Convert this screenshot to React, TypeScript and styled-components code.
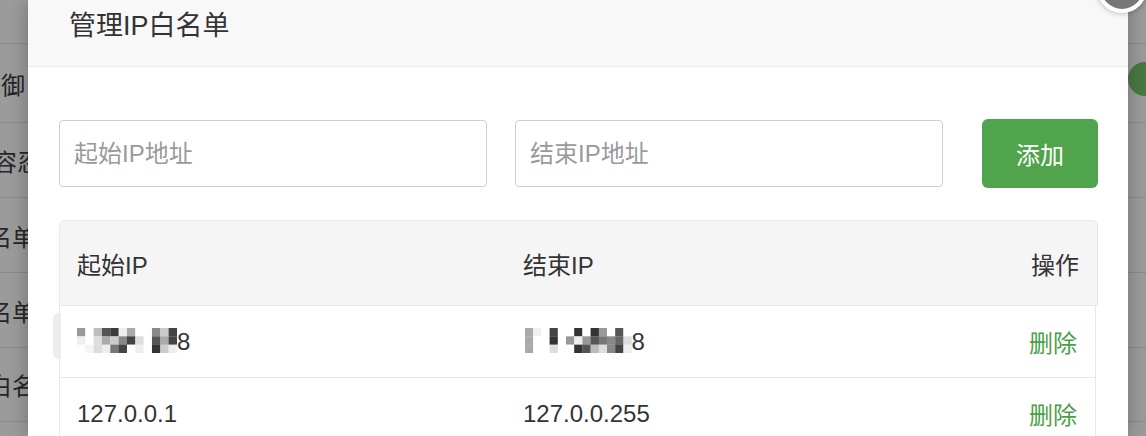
import styled, { createGlobalStyle } from "styled-components";

const GlobalStyle = createGlobalStyle`
  html, body {
    margin: 0;
    padding: 0;
    overflow: hidden;
  }
  body {
    font-family: "Liberation Sans", "Noto Sans CJK SC", sans-serif;
    color: #333;
  }
`;

const Page = styled.div`
  position: relative;
  display: flex;
  width: 1146px;
  height: 436px;
  overflow: hidden;
  background: #9b9b9b;
`;

const Strip = styled.div<{ $width: number }>`
  flex: none;
  width: ${(p) => p.$width}px;
  overflow: hidden;
  display: flex;
  flex-direction: column;
`;

const StripTop = styled.div`
  height: 43px;
  flex: none;
`;

const StripRow = styled.div<{ $height: number }>`
  flex: none;
  height: ${(p) => p.$height}px;
  box-sizing: border-box;
  border-top: 1px solid #8b8b8b;
  display: flex;
  align-items: center;
  white-space: nowrap;
`;

const StripText = styled.span<{ $offset: number }>`
  margin-left: ${(p) => p.$offset}px;
  font-size: 24px;
  color: #262626;
`;

const Toggle = styled.div`
  flex: none;
  width: 40px;
  height: 34px;
  margin-top: -8px;
  border-radius: 17px;
  background: #4a7843;
`;

const Modal = styled.div`
  position: relative;
  z-index: 1;
  flex: none;
  width: 1100px;
  background: #fff;
  box-shadow: 0 0 18px rgba(0, 0, 0, 0.28);
`;

const Header = styled.div`
  height: 66px;
  padding-left: 41px;
  background: #f8f8f8;
  border-bottom: 1px solid #ececec;
`;

const Title = styled.h3`
  margin: 0;
  font-size: 27px;
  font-weight: normal;
  line-height: 52px;
  color: #333;
`;

const Body = styled.div`
  padding: 52px 30px 0 31px;
`;

const FormRow = styled.div`
  display: flex;
  align-items: center;
  gap: 28px;
`;

const Input = styled.input`
  box-sizing: border-box;
  width: 428px;
  height: 67px;
  padding: 0 14px;
  border: 1px solid #cfcfcf;
  border-radius: 4px;
  font-family: inherit;
  font-size: 24px;
  color: #333;
  outline: none;
  &::placeholder {
    color: #9a9a9a;
  }
`;

const AddButton = styled.button`
  margin-left: auto;
  width: 116px;
  height: 69px;
  border: none;
  border-radius: 6px;
  background: #50a44b;
  color: #fff;
  font-family: inherit;
  font-size: 24px;
  cursor: pointer;
`;

const Table = styled.div`
  margin-top: 32px;
`;

const Row = styled.div<{ $head?: boolean }>`
  position: relative;
  display: grid;
  grid-template-columns: 446px 1fr auto;
  align-items: center;
  box-sizing: border-box;
  height: ${(p) => (p.$head ? 86 : 72)}px;
  padding: 0 18px 0 17px;
  margin-right: ${(p) => (p.$head ? 0 : 2)}px;
  border: 1px solid #e8e8e8;
  border-top: ${(p) => (p.$head ? "1px solid #e8e8e8" : "none")};
  border-radius: ${(p) => (p.$head ? "6px 6px 0 0" : "0")};
  background: ${(p) => (p.$head ? "#f5f5f5" : "#fff")};
  font-size: 24px;
  color: #333;
`;

const Cell = styled.div`
  display: flex;
  align-items: center;
  white-space: nowrap;
`;

const ActionCell = styled(Cell)<{ $link?: boolean }>`
  justify-content: flex-end;
  color: ${(p) => (p.$link ? "#4a9f46" : "#333")};
  cursor: ${(p) => (p.$link ? "pointer" : "default")};
`;

const Handle = styled.div`
  position: absolute;
  left: -7px;
  top: 7px;
  width: 8px;
  height: 46px;
  border-radius: 6px 0 0 6px;
  background: #ececec;
`;

const CloseButton = styled.div`
  position: absolute;
  z-index: 2;
  left: 1097px;
  top: -37px;
  width: 42px;
  height: 42px;
  border: 4px solid #fff;
  border-radius: 50%;
  background: #777;
  box-shadow: 0 0 6px rgba(0, 0, 0, 0.3);
`;

type Mosaic = { cell: number; offset: number; rows: string[][] };

const w = "#fff";

const startMosaic: Mosaic = {
  cell: 8.33,
  offset: 0,
  rows: [
    ["#9a9a9a", w, "#bdbdbd", "#555", "#3a3a3a", "#eee", "#aaa", w, w, "#888", "#ccc", "#444"],
    ["#eee", w, "#ddd", "#aaa", "#ccc", "#888", "#444", "#ddd", w, "#555", "#aaa", "#444"],
    [w, "#f5f5f5", "#ddd", "#eee", "#777", "#444", w, "#eee", w, "#333", "#ccc", "#eee"],
  ],
};

const endMosaic: Mosaic = {
  cell: 8.2,
  offset: 2,
  rows: [
    ["#aaa", "#f0f0f0", w, "#444", w, w, "#333", w, "#333", "#999", w, "#555", w],
    ["#aaa", w, w, "#333", w, "#999", "#eee", "#999", "#555", "#777", "#888", "#666", "#ddd"],
    ["#aaa", w, w, "#ddd", w, w, "#333", "#555", "#bbb", "#ddd", "#888", "#444", "#eee"],
  ],
};

function MaskedIp({ mosaic, tail }: { mosaic: Mosaic; tail: string }) {
  const cols = mosaic.rows[0].length;
  const width = cols * mosaic.cell;
  return (
    <Cell>
      <svg
        width={width + mosaic.offset}
        height={25}
        viewBox={`0 0 ${width + mosaic.offset} 25`}
        style={{ marginTop: -2 }}
      >
        {mosaic.rows.map((row, r) =>
          row.map((c, i) => (
            <rect
              key={`${r}-${i}`}
              x={mosaic.offset + i * mosaic.cell}
              y={r * 8.33}
              width={mosaic.cell + 0.2}
              height={8.53}
              fill={c}
            />
          ))
        )}
      </svg>
      {tail}
    </Cell>
  );
}

const leftRows = [
  { h: 79, text: "防御", offset: -23 },
  { h: 75, text: "容忍度", offset: -7 },
  { h: 75, text: "黑名单", offset: -36 },
  { h: 75, text: "黑名单", offset: -36 },
  { h: 74, text: "白名单", offset: -12 },
  { h: 40, text: "", offset: 0 },
];

function App() {
  return (
    <>
      <GlobalStyle />
      <Page>
        <Strip $width={28}>
          <StripTop />
          {leftRows.map((r, i) => (
            <StripRow key={i} $height={r.h}>
              <StripText $offset={r.offset}>{r.text}</StripText>
            </StripRow>
          ))}
        </Strip>

        <Modal>
          <Header>
            <Title>管理IP白名单</Title>
          </Header>
          <Body>
            <FormRow>
              <Input placeholder="起始IP地址" />
              <Input placeholder="结束IP地址" />
              <AddButton>添加</AddButton>
            </FormRow>

            <Table>
              <Row $head>
                <Cell>起始IP</Cell>
                <Cell>结束IP</Cell>
                <ActionCell>操作</ActionCell>
              </Row>
              <Row>
                <Handle />
                <MaskedIp mosaic={startMosaic} tail="8" />
                <MaskedIp mosaic={endMosaic} tail="8" />
                <ActionCell $link>删除</ActionCell>
              </Row>
              <Row>
                <Cell>127.0.0.1</Cell>
                <Cell>127.0.0.255</Cell>
                <ActionCell $link>删除</ActionCell>
              </Row>
            </Table>
          </Body>
        </Modal>

        <Strip $width={18}>
          <StripTop />
          <StripRow $height={79}>
            <Toggle />
          </StripRow>
          <StripRow $height={75} />
          <StripRow $height={75} />
          <StripRow $height={75} />
          <StripRow $height={74} />
          <StripRow $height={40} />
        </Strip>

        <CloseButton />
      </Page>
    </>
  );
}

export default App;
